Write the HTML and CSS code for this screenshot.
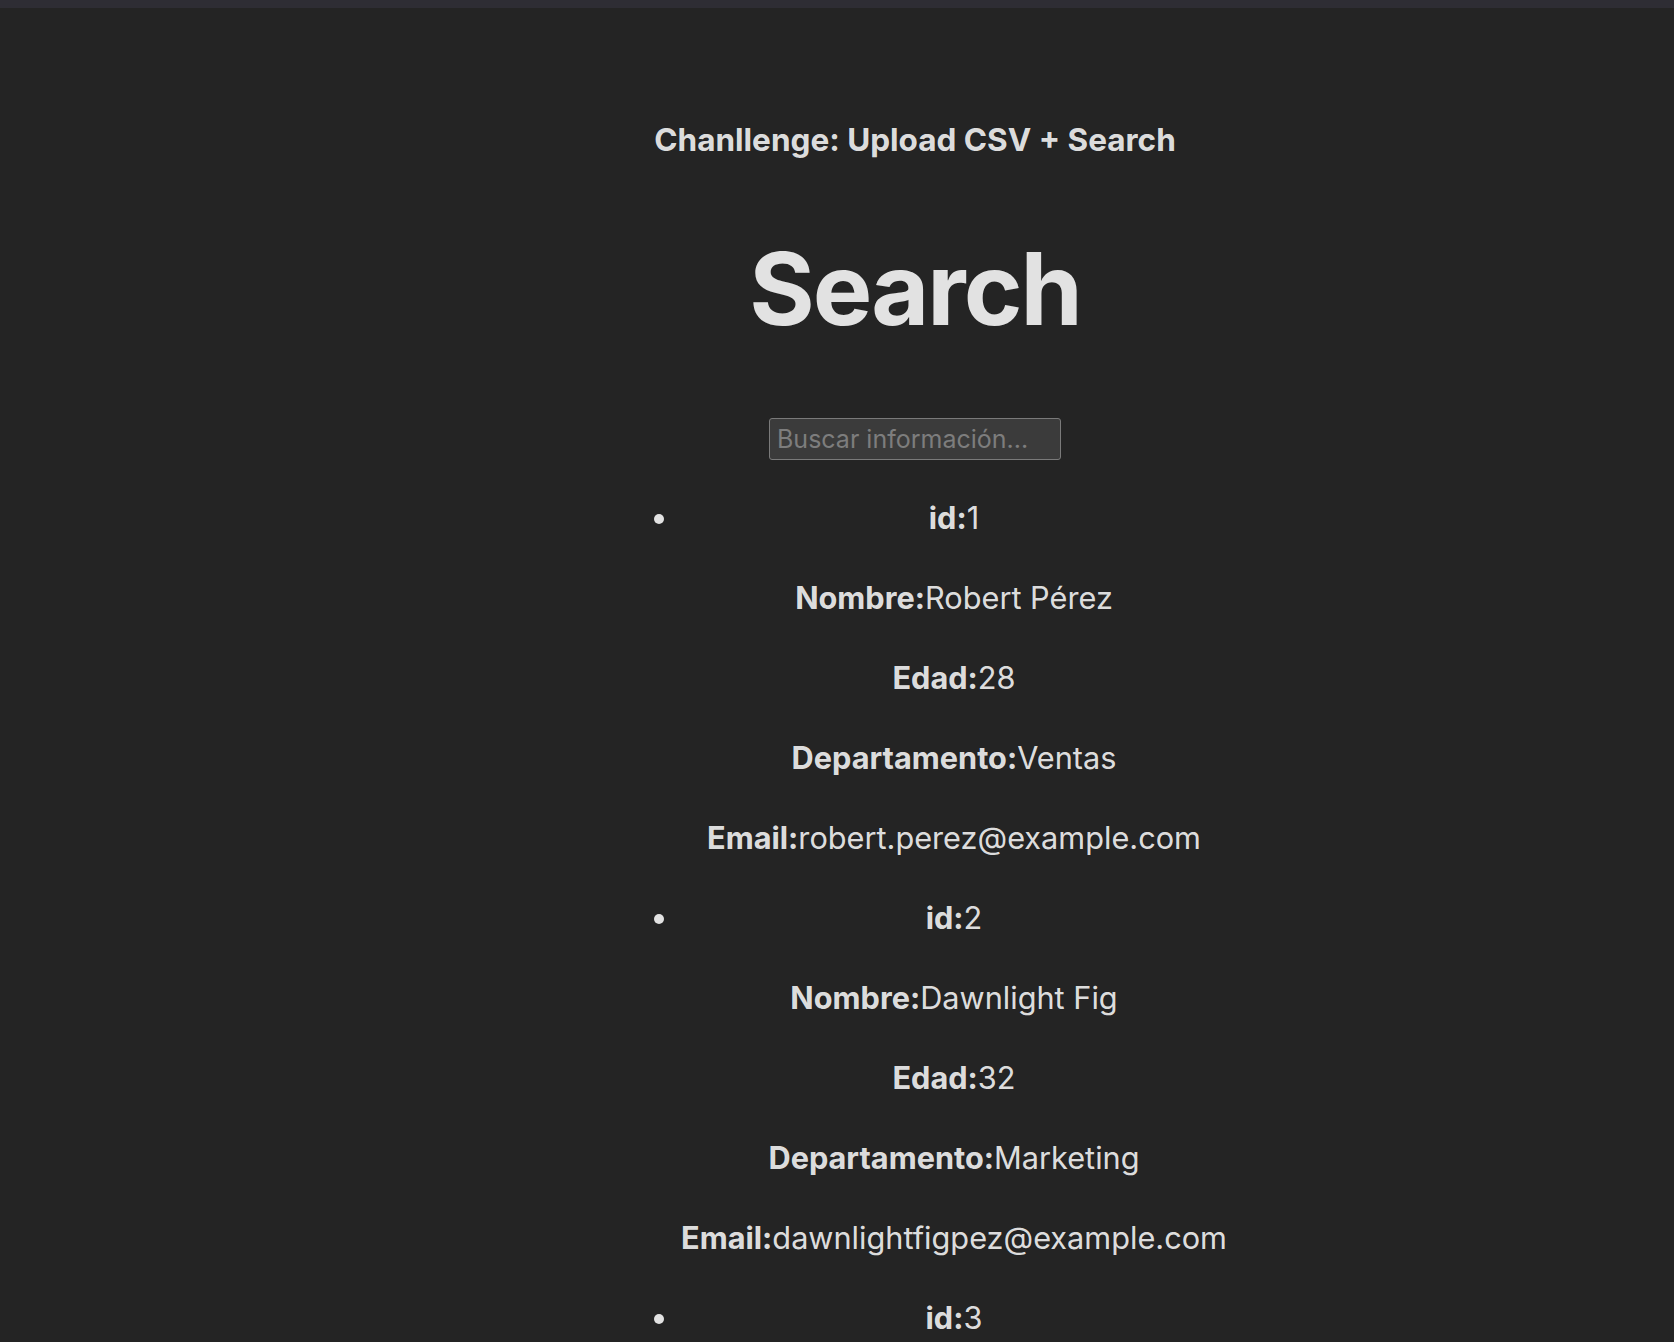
FILE: index.html
```html
<!DOCTYPE html>
<html lang="es">
<head>
<meta charset="utf-8">
<title>Search</title>
<link rel="stylesheet" href="styles.css">
</head>
<body>
<div class="topbar"></div>
<main class="app">
  <h3 class="subtitle">Chanllenge: Upload CSV + Search</h3>
  <h1 class="title">Search</h1>
  <div class="search-row">
    <input class="search-input" type="text" placeholder="Buscar información...">
  </div>
  <ul class="results">
    <li class="result">
      <p><strong>id:</strong>1</p>
      <p><strong>Nombre:</strong>Robert Pérez</p>
      <p><strong>Edad:</strong>28</p>
      <p><strong>Departamento:</strong>Ventas</p>
      <p><strong>Email:</strong>robert.perez@example.com</p>
    </li>
    <li class="result">
      <p><strong>id:</strong>2</p>
      <p><strong>Nombre:</strong>Dawnlight Fig</p>
      <p><strong>Edad:</strong>32</p>
      <p><strong>Departamento:</strong>Marketing</p>
      <p><strong>Email:</strong>dawnlightfigpez@example.com</p>
    </li>
    <li class="result">
      <p><strong>id:</strong>3</p>
    </li>
  </ul>
</main>
</body>
</html>
```

FILE: styles.css
```css
html {
  background: #242424;
}
body {
  margin: 0;
  background: #242424;
  color: rgba(255, 255, 255, 0.87);
  font-family: Inter, "Noto Sans", "Liberation Sans", sans-serif;
  font-size: 30.7px;
  line-height: 48px;
}
.topbar {
  height: 8px;
  background: #2e2d34;
}
.app {
  padding: 64px 0 64px 156px;
  text-align: center;
  display: flex;
  flex-direction: column;
  align-items: center;
}
.subtitle {
  margin: 40px 0 0;
  font-size: 31.5px;
  line-height: 56px;
  font-weight: 700;
}
.title {
  margin: 65px 0 0;
  font-size: 100px;
  line-height: 112px;
  font-weight: 700;
  letter-spacing: -2px;
}
.search-row {
  margin-top: 73px;
  display: flex;
  justify-content: center;
}
.search-input {
  box-sizing: border-box;
  width: 292px;
  height: 42px;
  margin: 0;
  padding: 0 7px;
  border: 1px solid #7a7a7a;
  border-radius: 3px;
  background: #3b3b3b;
  color: #e6e6e6;
  font-family: Inter, "Noto Sans", "Liberation Sans", sans-serif;
  font-size: 25px;
  outline: none;
}
.search-input::placeholder {
  color: #7d7d7d;
}
.results {
  margin: 0;
  padding: 2px 0 0 78px;
  list-style: disc outside;
}
.result p {
  margin: 32px 0 0;
}
.result strong {
  font-weight: 700;
}
```
